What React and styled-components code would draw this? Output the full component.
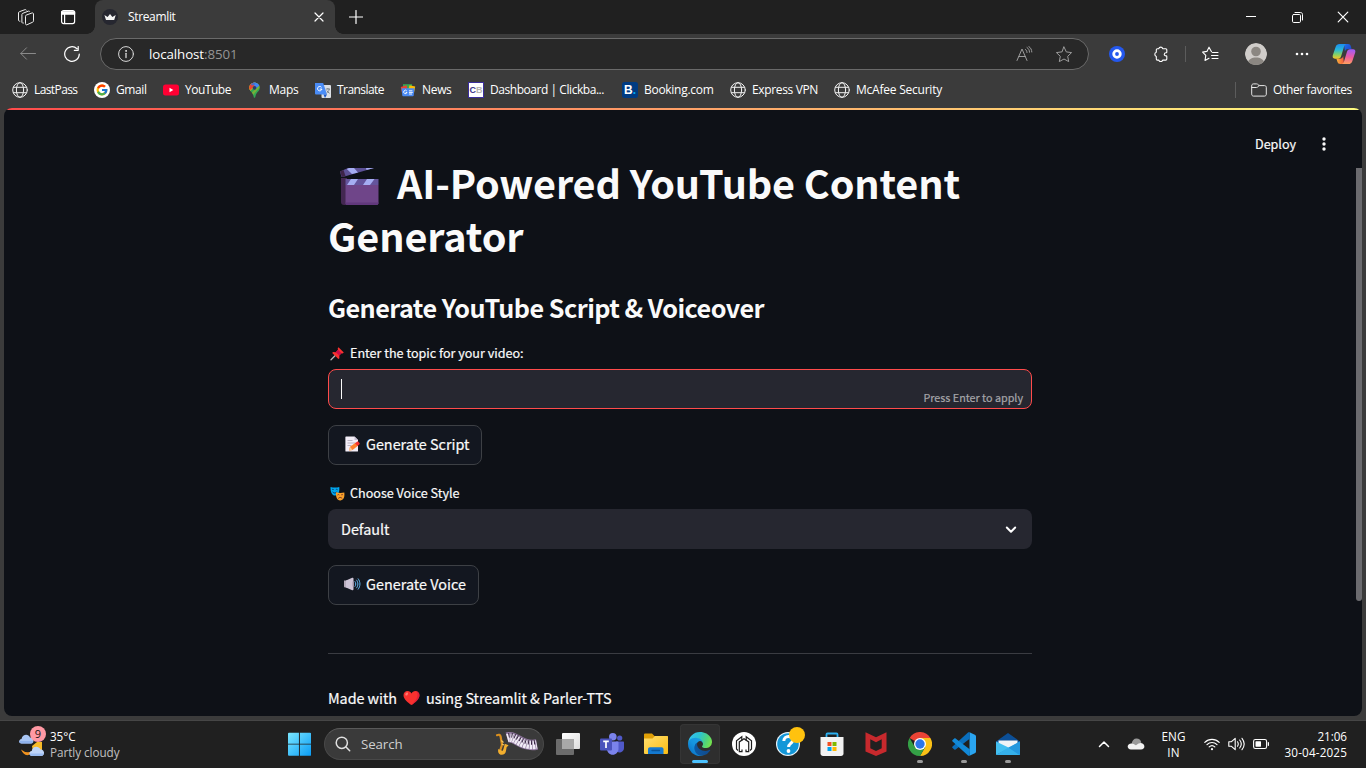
import React, { useLayoutEffect, useRef, useState } from 'react';
import styled, { createGlobalStyle } from 'styled-components';
import { FcGoogle } from 'react-icons/fc';

const ui = '"Open Sans", "Noto Sans", "Liberation Sans", sans-serif';
const source = '"Noto Sans CJK SC", "Open Sans", sans-serif';

const GlobalStyle = createGlobalStyle`
  * { box-sizing: border-box; }
  html, body { margin: 0; padding: 0; overflow: hidden; background: #3b3b3b; }
  svg { display: block; flex: none; }
`;

/* Text that tracks itself to an exact advance width. */
const FitSpan = styled.span`
  display: block;
  flex: none;
  white-space: pre;
`;
function Fit({ width, children, className }) {
  const ref = useRef(null);
  const [tracking, setTracking] = useState(0);
  useLayoutEffect(() => {
    const el = ref.current;
    const range = document.createRange();
    range.selectNodeContents(el);
    const natural = range.getBoundingClientRect().width;
    setTracking((width - natural) / el.textContent.length);
  }, [width]);
  return (
    <FitSpan ref={ref} className={className} style={{ width, letterSpacing: tracking }}>
      {children}
    </FitSpan>
  );
}

/* ---------- window frame ---------- */
const Screen = styled.div`
  width: 1366px;
  height: 768px;
  display: flex;
  flex-direction: column;
  background: #3b3b3b;
  overflow: hidden;
  font-family: ${ui};
`;
const TitleBar = styled.div`
  height: 34px;
  flex: none;
  display: flex;
  background: #202020;
`;
const Slot = styled.div`
  width: ${(p) => p.$w}px;
  height: ${(p) => p.$h || 34}px;
  flex: none;
  display: flex;
  align-items: center;
  justify-content: center;
`;
const Tab = styled.div`
  position: relative;
  width: 240px;
  height: 34px;
  display: flex;
  align-items: center;
  padding: 0 9px 0 7px;
  background: #3b3b3b;
  border-radius: 8px 8px 0 0;
  &::before, &::after {
    content: '';
    position: absolute;
    bottom: 0;
    width: 8px;
    height: 8px;
  }
  &::before { left: -8px; background: radial-gradient(circle at 0 0, transparent 7.5px, #3b3b3b 8px); }
  &::after { right: -8px; background: radial-gradient(circle at 100% 0, transparent 7.5px, #3b3b3b 8px); }
`;
const TabTitle = styled(Fit)`
  margin: 0 auto 0 10px;
  font-size: 12px;
  line-height: 16px;
  color: #fff;
`;
const Spacer = styled.div`flex: 1;`;

const Toolbar = styled.div`
  height: 40px;
  flex: none;
  display: flex;
  align-items: center;
  padding-left: 6px;
`;
const Address = styled.div`
  width: 989px;
  height: 32px;
  margin-left: 6px;
  margin-right: 6px;
  flex: none;
  display: flex;
  align-items: center;
  padding: 0 4px 0 15px;
  border: 1px solid #6a6a6a;
  border-radius: 16px;
  background: #282828;
`;
const Url = styled(Fit)`
  margin-left: 13px;
  font-size: 13.3px;
  line-height: 20px;
  color: #fff;
  i { font-style: normal; color: #959595; }
`;
const Divider = styled.div`
  width: 1px;
  height: 16px;
  flex: none;
  background: #5c5c5c;
`;
const Avatar = styled.div`
  width: 22px;
  height: 22px;
  border-radius: 50%;
  overflow: hidden;
`;

const Bookmarks = styled.div`
  height: 34px;
  flex: none;
  display: flex;
  align-items: center;
  padding: 0 14px 2px 12px;
`;
const Bookmark = styled.div`
  width: ${(p) => p.$w}px;
  flex: none;
  display: flex;
  align-items: center;
  gap: ${(p) => p.$gap || 6}px;
`;
const BookmarkName = styled(Fit)`
  font-size: 12px;
  line-height: 16px;
  color: #fff;
`;

/* ---------- streamlit page ---------- */
const Page = styled.main`
  position: relative;
  height: 608px;
  flex: none;
  margin: 0 4px;
  background: #0e1117;
  border-radius: 8px;
  overflow: hidden;
  display: flex;
  flex-direction: column;
  font-family: ${source};
  color: #fafafa;
  -webkit-text-stroke: 0.2px;
`;
const Decoration = styled.div`
  height: 2px;
  flex: none;
  background: linear-gradient(90deg, #ff4b4b, #ffa168 50%, #fffd80);
`;
const Header = styled.header`
  height: 58px;
  flex: none;
  display: flex;
  align-items: center;
  justify-content: flex-end;
  gap: 19px;
  padding: 9px 29px 0 0;
`;
const DeployLabel = styled(Fit)`
  font-size: 12.6px;
  line-height: 20px;
`;
const Content = styled.div`
  width: 704px;
  margin-left: 324px;
  display: flex;
  flex-direction: column;
  align-items: flex-start;
`;
const Title = styled.h1`
  margin: -13px 0 0;
  font-size: 39.6px;
  font-weight: 700;
  line-height: 53px;
  -webkit-text-stroke: 0;
`;
const TitleRow = styled.div`
  height: 53px;
  display: flex;
  align-items: center;
  padding-left: ${(p) => p.$indent || 0}px;
  gap: 17px;
`;
const ClapperBox = styled.div`padding-top: 9px;`;
const Subtitle = styled.h3`
  margin: 27px 0 0;
  height: 40px;
  font-size: 25.2px;
  line-height: 38px;
  font-weight: 600;
  -webkit-text-stroke: 0;
`;
const FieldLabel = styled.label`
  height: 20px;
  margin-top: ${(p) => p.$top}px;
  margin-bottom: 6px;
  padding-left: 2px;
  display: flex;
  align-items: center;
  gap: 5px;
  font-size: 12.6px;
  line-height: 20px;
`;
const Input = styled.div`
  width: 704px;
  height: 40px;
  padding: 0 8px 0 12px;
  display: flex;
  align-items: center;
  justify-content: space-between;
  border: 1px solid #ff4b4b;
  border-radius: 8px;
  background: #262730;
`;
const Caret = styled.div`
  width: 1px;
  height: 20px;
  background: #fafafa;
`;
const Hint = styled(Fit)`
  margin-top: 16px;
  font-size: 10.8px;
  line-height: 16px;
  color: #a5a5a9;
`;
const Button = styled.button`
  width: ${(p) => p.$w}px;
  height: 40px;
  margin: 16px 0 0;
  padding: 0 0 2px 15px;
  display: flex;
  align-items: center;
  gap: ${(p) => p.$gap || 6}px;
  border: 1px solid #3d4045;
  border-radius: 8px;
  background: #131720;
  color: #fafafa;
  font-family: ${source};
  font-size: 14.4px;
  line-height: 24px;
  -webkit-text-stroke: 0.2px;
`;
const Select = styled.div`
  width: 704px;
  height: 40px;
  padding: 0 14px 0 13px;
  display: flex;
  align-items: center;
  justify-content: space-between;
  border-radius: 8px;
  background: #262730;
  font-size: 14.4px;
  line-height: 24px;
`;
const Rule = styled.hr`
  width: 704px;
  height: 1px;
  margin: 48px 0 32px;
  border: 0;
  background: #3a3c42;
`;
const Credit = styled.p`
  margin: 0;
  display: flex;
  align-items: center;
  gap: 6px;
  font-size: 14.4px;
  line-height: 24px;
`;
const ScrollThumb = styled.div`
  position: absolute;
  right: 0;
  top: 60px;
  width: 6px;
  height: 433px;
  border-radius: 0 0 3px 3px;
  background: #6b6b6f;
`;

/* ---------- taskbar ---------- */
const Taskbar = styled.footer`
  height: 48px;
  margin-top: 4px;
  padding-bottom: 2px;
  flex: none;
  display: flex;
  align-items: center;
  border-top: 1px solid #464646;
  background: #202020;
`;
const Weather = styled.div`
  position: relative;
  width: 277px;
  height: 45px;
  display: flex;
  align-items: center;
  padding-left: 18px;
  gap: 4px;
`;
const Badge = styled.div`
  position: absolute;
  left: 30px;
  top: 5px;
  width: 16px;
  height: 16px;
  border-radius: 50%;
  background: #ff99a4;
  color: #151515;
  font-size: 11px;
  line-height: 16px;
  text-align: center;
`;
const Lines = styled.div`
  display: flex;
  flex-direction: column;
  align-items: ${(p) => p.$align || 'flex-start'};
  font-size: 11.7px;
  line-height: 16px;
  color: #fff;
`;
const Muted = styled(Fit)`color: #c0c0c0;`;
const SearchBox = styled.div`
  width: 220px;
  height: 32px;
  margin: 0 2px 0 3px;
  display: flex;
  align-items: center;
  padding: 0 4px 0 10px;
  border: 1px solid #484848;
  border-top-color: #5a5a5a;
  border-radius: 16px;
  background: #3a3a3a;
  color: #cfcfcf;
`;
const SearchText = styled(Fit)`
  margin: 0 auto 0 10px;
  font-size: 13.3px;
  line-height: 20px;
`;
const AppTile = styled.div`
  position: relative;
  width: 40px;
  height: 40px;
  margin: 0 2px;
  flex: none;
  display: flex;
  align-items: center;
  justify-content: center;
  border-radius: 4px;
  background: ${(p) => (p.$active ? '#2e2e2e' : 'transparent')};
  box-shadow: ${(p) => (p.$active ? 'inset 0 0 0 1px #353535' : 'none')};
`;
const RunMark = styled.div`
  position: absolute;
  left: ${(p) => (p.$active ? 12 : 17)}px;
  bottom: 1px;
  width: ${(p) => (p.$active ? 16 : 6)}px;
  height: 3px;
  border-radius: 2px;
  background: ${(p) => (p.$active ? '#4cc2ff' : '#9a9a9a')};
`;
const Tray = styled.div`
  display: flex;
  align-items: center;
  margin-left: auto;
  padding-right: 19px;
`;

/* ---------- icons ---------- */
const Line = ({ s = 16, h, vb, w = 1, c = '#fff', children, ...rest }) => (
  <svg width={s} height={h || s} viewBox={vb || `0 0 ${s} ${h || s}`} fill="none" stroke={c} strokeWidth={w} strokeLinecap="round" strokeLinejoin="round" {...rest}>
    {children}
  </svg>
);

const Workspaces = () => (
  <Line s={18} h={17} c="#eee">
    <path d="M8.500 7.300c0-.7.300-1.100.9-1.300l5.500-2c.9-.3 1.600.1 1.600 1v6.800c0 .7-.3 1.100-.9 1.400l-5.500 2.500c-.9.400-1.600 0-1.600-.9z" />
    <path d="M6.400 14.100c-.9.200-1.500-.2-1.500-1.100V5.600c0-.7.300-1.100.9-1.300l5.500-2.100c.7-.2 1.100-.1 1.400.3" />
    <path d="M2.900 12.200c-.9.100-1.400-.3-1.400-1.200V4c0-.7.300-1.100.9-1.300L7.900.700c.7-.2 1.100-.1 1.400.3" />
  </Line>
);
const TabPanel = () => (
  <Line s={16} w={1.2}>
    <rect x="1.600" y="1.600" width="13" height="13" rx="2" />
    <path d="M1.600 2.800h13v2.300h-13z" fill="#fff" />
    <path d="M4.600 5v9.500" />
  </Line>
);
const Crown = () => (
  <svg width="16" height="16" viewBox="0 0 16 16">
    <circle cx="8" cy="8" r="8" fill="#262730" />
    <path d="M2.400 5.900 5.600 8.100 8 5.100l2.400 3 3.300-2.200-1.500 5.100H4z" fill="#f4f4f4" />
  </svg>
);
const Cross = ({ s = 10, w = 1.200 }) => (
  <Line s={s} w={w} vb="0 0 10 10"><path d="M1 1l8 8M9 1L1 9" /></Line>
);
const Globe = () => (
  <Line s={16} c="#f0f0f0" w={1}>
    <circle cx="8" cy="8" r="7.300" />
    <ellipse cx="8" cy="8" rx="3.600" ry="7.300" />
    <path d="M1.500 5.300h13M1.500 10.700h13" />
  </Line>
);
const GoogleBadge = () => (
  <svg width="16" height="16" viewBox="0 0 16 16">
    <circle cx="8" cy="8" r="8" fill="#fff" />
    <FcGoogle x="1.500" y="1.500" size={13} />
  </svg>
);
const YouTubeIcon = () => (
  <svg width="16" height="16" viewBox="0 0 16 16">
    <rect y="2.500" width="16" height="11" rx="2.500" fill="#ff0033" />
    <path d="M6.500 5.800v4.400L10.300 8z" fill="#fff" />
  </svg>
);
const MapsIcon = () => (
  <svg width="16" height="16" viewBox="0 0 16 16">
    <clipPath id="pin"><path d="M7.500.500a5.300 5.300 0 0 1 5.300 5.300c0 3.200-3 4-4.300 8.100-.3 1.600-.5 1.900-1 1.900s-.7-.4-1-1.900c-1.200-4.100-4.300-4.900-4.300-8.100A5.300 5.300 0 0 1 7.500.500z" /></clipPath>
    <g clipPath="url(#pin)">
      <path d="M0 0h16v16H0z" fill="#34a853" />
      <path d="M1 11 12 0H0z" fill="#fbbc04" />
      <path d="M4.500 11 13 2.500V5L6 13z" fill="#fbbc04" opacity=".35" />
      <path d="M5.500 0H12l1.500 2.500L9.500 6 6.500 4z" fill="#4285f4" />
      <path d="M0 0h6.200L7.500 3.500 3.500 8 1 6z" fill="#ea4335" />
      <path d="M1 0h8L7.500 3 5 3.500 3.500 2z" fill="#2f73e0" opacity=".8" />
    </g>
    <circle cx="7.500" cy="5.800" r="1.900" fill="#2b4066" />
  </svg>
);
const TranslateIcon = () => (
  <svg width="16" height="16" viewBox="0 0 16 16">
    <rect x="6.500" y="3" width="9.500" height="13" rx="1" fill="#dcdfe4" />
    <path d="M0 1h8.200l3.800 11.500H1a1 1 0 0 1-1-1z" fill="#4a8cf6" />
    <path d="M8.500 12.500H12L10 16z" fill="#1a56c4" />
    <path d="M6.500 5.300a2.200 2.200 0 1 0 .4 1.800H4.700" fill="none" stroke="#fff" strokeWidth="1" />
    <path d="M10.800 7h4.200M12.900 6v1M14.300 7c-.4 2-1.500 3.200-2.600 4M11.800 8.500c.6 1.200 1.600 2.200 2.800 2.800" fill="none" stroke="#6a7178" strokeWidth=".8" />
  </svg>
);
const NewsIcon = () => (
  <svg width="16" height="16" viewBox="0 0 16 16">
    <path d="M3 2.200h9v6H3z" fill="#34a853" />
    <path d="M.800 5 6.500 3.300 8 9l-6 2z" fill="#ea4335" />
    <path d="M15.200 4.500 9.500 3.300 8 9l6 2z" fill="#fbbc04" />
    <path d="M1.500 6.200h13l-.8 7.300a.8.800 0 0 1-.8.700H3.100a.8.800 0 0 1-.8-.7z" fill="#4a8af4" />
    <path d="M6.800 9a1.700 1.700 0 1 0 .2 1.500H5.700" fill="none" stroke="#fff" strokeWidth=".9" />
    <path d="M9 8.800h3.400M9 10.400h3.800M9 12h3" stroke="#fff" strokeWidth=".9" />
  </svg>
);
const LetterTile = styled.div`
  width: 16px;
  height: 16px;
  flex: none;
  display: flex;
  align-items: center;
  justify-content: center;
  border-radius: ${(p) => p.$r || 0}px;
  border: ${(p) => (p.$edge ? `1px solid ${p.$edge}` : '0')};
  background: ${(p) => p.$bg};
  color: ${(p) => p.$fg};
  font: 700 ${(p) => p.$size}px/14px "Liberation Sans", sans-serif;
  em { font-style: normal; color: ${(p) => p.$fg2}; }
`;
const FolderOutline = () => (
  <Line s={16} c="#e8e8e8"><path d="M.700 3.600c0-1 .7-1.700 1.700-1.700h3.200c.5 0 .9.2 1.200.5l1.300 1.200h5.400c1 0 1.800.700 1.800 1.700v7c0 1-.8 1.800-1.800 1.800H2.400c-1 0-1.700-.8-1.700-1.800zM.700 5.500h4.800c.5 0 .8-.1 1.100-.5l1.500-1.400" /></Line>
);

const Copilot = () => (
  <svg width="24" height="22" viewBox="0 0 24 22">
    <defs>
      <linearGradient id="cpA" x1="0" y1="0" x2="0" y2="1"><stop offset="0" stopColor="#1b8df0" /><stop offset=".4" stopColor="#29b8d8" /><stop offset=".7" stopColor="#7fd06a" /><stop offset="1" stopColor="#f6c526" /></linearGradient>
      <linearGradient id="cpB" x1=".3" y1="0" x2=".2" y2="1"><stop offset="0" stopColor="#a05cf5" /><stop offset=".5" stopColor="#ec5aa0" /><stop offset="1" stopColor="#ffa25c" /></linearGradient>
      <linearGradient id="cpC" x1="0" y1="0" x2="1" y2="1"><stop offset="0" stopColor="#2270ee" /><stop offset="1" stopColor="#1b3fc0" /></linearGradient>
      <linearGradient id="cpD" x1="0" y1="0" x2="1" y2="0"><stop offset="0" stopColor="#f8b43a" /><stop offset="1" stopColor="#f2583e" /></linearGradient>
    </defs>
    <path d="M12 1h4c1.600 0 2.300.8 2.800 2.200l.8 2.800h-3.200c-2 0-2.900.8-3.500 2.600z" fill="url(#cpC)" />
    <path d="M12 21H8.300c-1.600 0-2.400-.8-2.900-2.200l-1-3.100h3.500c1.900 0 2.700-.8 3.300-2.600z" fill="url(#cpD)" />
    <path d="M7.500 1h6.800c-1.200.3-1.800 1.200-2.300 2.700L9.200 13c-.6 1.800-1.400 2.700-3.200 2.700H3c-2 0-2.700-1.600-2.200-3.400L3.700 3.800C4.300 1.900 5.600 1 7.500 1z" fill="url(#cpA)" />
    <path d="M16.500 21H9.800c1.200-.3 1.800-1.200 2.300-2.700L14.900 9c.6-1.900 1.400-2.800 3.200-2.800H21c2 0 2.800 1.600 2.200 3.400l-2.900 8.600c-.6 1.900-1.900 2.800-3.800 2.800z" fill="url(#cpB)" />
  </svg>
);

/* page emoji */
const Clapper = () => (
  <svg width="40" height="37" viewBox="0 0 40 37">
    <path d="M1 10h6v27H4c-2 0-3-1-3-3z" fill="#432751" />
    <path d="M0 3.500 8 0h26L4.500 8.400 1.500 9z" fill="#5c5196" />
    <path d="M0 3.500 3.500 2 5.500 8 2 9z" fill="#3d2348" />
    <path d="M9 0h5l4 4.500-6 1.600L6.800 1zM26 0h8l-7.500 2z" fill="#a5adf2" />
    <path d="M5.500 11h33v6h-33z" fill="#64549c" />
    <path d="M11 11h7l-4 6H7zM27 11h7.500l-4.500 6h-7z" fill="#a5adf2" />
    <path d="M5.500 17h33v18c0 1.200-.8 2-2 2h-29c-1.200 0-2-.8-2-2z" fill="#6f4589" />
    <path d="M5.500 34.500h33c0 1.800-.7 2.500-2 2.500h-29c-1.300 0-2-.7-2-2.500z" fill="#61387c" />
  </svg>
);
const Pushpin = () => (
  <svg width="15" height="15" viewBox="0 0 15 15">
    <path d="M1 13.800 5.500 9.300" stroke="#b8b8bd" strokeWidth="1.300" strokeLinecap="round" />
    <path d="M8.500 1.200 13.800 6.500l-1.200.9-1-.2-2.300 2.400.1 2.700-1 .8L2.200 7l.8-1 2.700.2L8 3.800l-.3-1.300z" fill="#f8312f" />
    <path d="M5.700 6.200 8 3.800l3.600 3.400-2.300 2.400z" fill="#ca0b4a" />
  </svg>
);
const Memo = () => (
  <svg width="16" height="16" viewBox="0 0 16 16">
    <path d="M2 .500h8.500L14 4v11c0 .4-.3.600-.6.600H2c-.4 0-.6-.2-.6-.6V1.100c0-.3.200-.6.600-.6z" fill="#f3eef8" />
    <path d="M10.500.500V4H14z" fill="#c9bfd3" />
    <path d="M3.500 4.500h5M3.500 7h8M3.500 9.500h4" stroke="#b4acbc" strokeWidth=".9" />
    <path d="M5 14.500 6 10.800l5.500-4 2.500 3-5.500 4.100z" fill="#ff822d" />
    <path d="M5 14.500 6 10.800 8.500 13.900z" fill="#f9c79a" />
    <path d="M11 7.200 13 5.700c.6-.4 1.100-.3 1.500.2l1 1.200c.4.5.3 1-.2 1.400l-1.800 1.400z" fill="#f8312f" />
  </svg>
);
const Masks = () => (
  <svg width="15" height="15" viewBox="0 0 15 15">
    <path d="M.500 1c3 .8 6 .8 8.800 0 .3 4.500-.6 8.300-4 8.600C1.800 9.600.300 5.500.500 1z" fill="#00a6ed" />
    <path d="M2 3.800c.6-.6 1.200-.6 1.800 0M5.800 3.800c.6-.6 1.200-.6 1.800 0M2.500 5.700c1 1.800 3.400 1.800 4.600 0" fill="none" stroke="#10305c" strokeWidth=".9" />
    <path d="M6 6.200c2.800 1 5.600 1 8.300.3.500 4-.3 7.500-3.800 7.900-3.600.2-4.800-3.900-4.500-8.200z" fill="#f9a12b" />
    <path d="M7.500 9c.6-.6 1.200-.6 1.800 0M11.200 9c.6-.6 1.200-.6 1.800 0M8.200 12.500c1-1.400 2.900-1.400 4 0" fill="none" stroke="#6d2b22" strokeWidth=".9" />
  </svg>
);
const Speaker = () => (
  <svg width="17" height="16" viewBox="0 0 17 16">
    <path d="M0 4.600h3v6.800H.8c-.4 0-.8-.4-.8-.8z" fill="#b5aabb" />
    <path d="M2 4.600 8.200 1.800c.8-.3 1.300 0 1.300.9v10.600c0 .8-.6 1.200-1.300.9L2 11.400z" fill="#cdc4d6" />
    <path d="M9.300 5.500v5" stroke="#998ea4" strokeWidth="1.400" />
    <path d="M11 5.600c1.100 1.400 1.100 3.400 0 4.800M12.600 4.100c1.800 2.300 1.800 5.500 0 7.800M14.200 2.800c2.400 3.100 2.400 7.300 0 10.400" fill="none" stroke="#62b5ee" strokeWidth="1" strokeLinecap="round" />
  </svg>
);
const Heart = () => (
  <svg width="17" height="16" viewBox="0 0 17 16">
    <path d="M8.500 15C5 12.800.500 9 .500 5.200.500 2.700 2.300 1 4.600 1c1.800 0 3.200.9 3.900 2.400C9.200 1.900 10.600 1 12.400 1c2.300 0 4.100 1.700 4.100 4.200C16.500 9 12 12.800 8.500 15z" fill="#f8312f" />
    <path d="M13.500 1.300c1.800.6 3 2 3 3.900C16.500 9 12 12.800 8.500 15c5-5 7.500-9 5-13.700z" fill="#d4183f" opacity=".6" />
    <ellipse cx="3.700" cy="4" rx="1.200" ry="1.700" transform="rotate(35 3.700 4)" fill="#ff7a72" />
  </svg>
);

/* taskbar icons */
const CloudSun = () => (
  <svg width="28" height="29" viewBox="0 0 28 29">
    <path d="M3 20.500a11 11 0 0 0 18-7l2 0v11H13c-4 3.500-8 1-10-4z" fill="#f0921e" />
    <path d="M14 17 19 13h5v9h-9z" fill="#f8bb28" />
    <path d="M3.500 14.500C.500 14.500.200 10.500 3.500 10c1-5 7-5.500 8.500-1.500 4-.5 5 5.500 1 6z" fill="#a9c6f4" />
    <path d="M3.500 14.500c-1.500 0-2.500-1-2.300-2.400h13.500c.2 1.300-.5 2.300-1.700 2.400z" fill="#8fb2ec" />
    <path d="M14 27c-3.200 0-3.500-4.500-.3-5 .5-5 7-5.800 8.800-1.500 4-.5 5 6 1 6.500z" fill="#bfd5f8" />
    <path d="M14 27c-1.600 0-2.500-1-2.400-2.500h14c0 1.500-.9 2.400-2.200 2.500z" fill="#9bbcf0" />
  </svg>
);
const WindowsLogo = () => (
  <svg width="24" height="24" viewBox="0 0 24 24">
    <defs><linearGradient id="win" gradientUnits="userSpaceOnUse" x1="0" y1="0" x2="24" y2="24"><stop offset="0" stopColor="#7be7ff" /><stop offset="1" stopColor="#0a9cf5" /></linearGradient></defs>
    <path d="M0 1a1 1 0 0 1 1-1h10.400v11.400H0zM12.400 0H23a1 1 0 0 1 1 1v10.400H12.400zM0 12.400h11.400V24H1a1 1 0 0 1-1-1zM12.400 12.400H24V23a1 1 0 0 1-1 1H12.400z" transform="translate(1 .7) scale(.96)" fill="url(#win)" />
  </svg>
);
const SearchArt = () => (
  <svg width="44" height="24" viewBox="0 0 44 24">
    <path d="M2 3.200c1.800-.9 3.300-.4 3.600 1.300l1.300 7.500c.4 3-2.400 5-1.400 7.500" fill="none" stroke="#d98f1e" strokeWidth="2.200" strokeLinecap="round" />
    <path d="M3.300 17c-.8 3 .5 5.800 3.400 5.800 2.400 0 4-1.500 4.300-4l.6-3.500 2-2-3.800-1.500-1.400 5.500-1 1.800z" fill="#f2ae2e" />
    <path d="M6.300 8.500l2.200 2M6.800 12l2.200 1" stroke="#f8c860" strokeWidth="1.200" />
    <path d="M12 5.500C21 3 26 15.500 42 12.500" fill="none" stroke="#8a7299" strokeWidth="10.500" />
    <path d="M12.300 6C21 3.500 26 15.500 41.700 12.500" fill="none" stroke="#f1ecf6" strokeWidth="8.500" strokeDasharray="2.400 .6" />
    <path d="M13.500 3.500C22 1.500 27 13 41 10" fill="none" stroke="#33213e" strokeWidth="4.500" strokeDasharray="1 2" />
  </svg>
);
const TaskView = () => (
  <svg width="24" height="24" viewBox="0 0 24 24">
    <defs><linearGradient id="tv" x1="0" y1="0" x2="1" y2="1"><stop offset="0" stopColor="#fff" /><stop offset="1" stopColor="#dcdcdc" /></linearGradient></defs>
    <rect x="6" y="1" width="18" height="16" rx="1" fill="url(#tv)" />
    <rect x="0" y="7" width="18" height="16" rx="1" fill="#6c6c6c" />
    <path d="M6 7h12v10H6z" fill="#a8a8a8" />
  </svg>
);
const Teams = () => (
  <svg width="24" height="24" viewBox="0 0 24 24">
    <circle cx="19.700" cy="6" r="2.600" fill="#5059c9" />
    <path d="M16 9.500h7c.6 0 1 .4 1 1v5.500a4.500 4.500 0 0 1-8 2.700z" fill="#5059c9" />
    <circle cx="12.800" cy="4.800" r="3.800" fill="#7b83eb" />
    <path d="M7 9.500h10.500c.6 0 1 .4 1 1v6.300c0 3.300-2.600 6-5.800 6s-5.800-2.700-5.800-6z" fill="#7b83eb" />
    <rect x="0" y="6.500" width="12" height="12" rx="1" fill="#4b53bc" />
    <path d="M3.200 9.400h5.600M6 9.400v6.500" stroke="#fff" strokeWidth="1.700" />
  </svg>
);
const Explorer = () => (
  <svg width="24" height="24" viewBox="0 0 24 24">
    <defs><linearGradient id="fe" x1="0" y1="0" x2="1" y2="1"><stop offset="0" stopColor="#ffdf70" /><stop offset="1" stopColor="#fbbc12" /></linearGradient></defs>
    <path d="M0 2.500A1 1 0 0 1 1 1.500h7L10.500 4H23a1 1 0 0 1 1 1v4H0z" fill="#e09f06" />
    <path d="M0 6.500h8.500L11 4h12a1 1 0 0 1 1 1v16a1 1 0 0 1-1 1H1a1 1 0 0 1-1-1z" fill="url(#fe)" />
    <path d="M4 22v-4.800c0-1.200.8-2 2-2h11.500c1.200 0 2 .8 2 2V22z" fill="#1479d0" />
    <path d="M8 18.500h7.500" stroke="#0a5499" strokeWidth="1.300" strokeLinecap="round" />
  </svg>
);
const Edge = () => (
  <svg width="24" height="24" viewBox="0 0 256 256">
    <defs>
      <linearGradient id="e1" x1="0" y1=".5" x2="1" y2=".5"><stop offset="0" stopColor="#0c59a4" /><stop offset="1" stopColor="#114a8b" /></linearGradient>
      <linearGradient id="e2" x1=".8" y1=".2" x2=".2" y2="1"><stop offset="0" stopColor="#1b9de2" /><stop offset=".4" stopColor="#1595df" /><stop offset="1" stopColor="#0a70c4" /></linearGradient>
      <linearGradient id="e3" x1="0" y1=".3" x2="1" y2=".6"><stop offset="0" stopColor="#35c1f1" /><stop offset=".4" stopColor="#2cc3d2" /><stop offset=".75" stopColor="#4fd37c" /><stop offset="1" stopColor="#75e34c" /></linearGradient>
    </defs>
    <path d="M231 190.500c-3.400 1.800-6.900 3.400-10.500 4.700a101.500 101.500 0 0 1-35.900 6.400c-47.300 0-88.500-32.500-88.500-74.300A31.500 31.500 0 0 1 112.600 100C69.800 101.800 58.800 146.400 58.800 172.500c0 74 68.100 81.400 82.800 81.400 7.900 0 19.800-2.300 27-4.600l1.300-.4a128.300 128.300 0 0 0 66.600-52.800 4 4 0 0 0-5.500-5.600z" fill="url(#e1)" />
    <path d="M105.700 241.500a79.200 79.200 0 0 1-22.700-21.400 80.700 80.700 0 0 1 29.500-120c3.200-1.500 8.500-4.100 15.600-4a32.400 32.400 0 0 1 25.700 13 31.900 31.900 0 0 1 6.300 18.700c0-.2 24.500-79.600-80-79.600-43.900 0-80 41.600-80 78.200a130.200 130.200 0 0 0 12.100 56 128 128 0 0 0 156.400 67 75.500 75.500 0 0 1-62.900-7.900z" fill="url(#e2)" />
    <path d="M152.400 148.900c-.8 1-3.300 2.500-3.300 5.700 0 2.600 1.700 5.100 4.700 7.200 14.400 10 41.500 8.700 41.600 8.700 10.700 0 21.100-2.900 30.300-8.300A61.400 61.400 0 0 0 256 109.200c.3-22.400-8-37.300-11.300-43.900C223.500 23.900 177.700 0 128 0A128 128 0 0 0 0 126.200c.5-36.500 36.800-66 80-66 3.500 0 23.500.3 42 10.100a72.600 72.600 0 0 1 30.900 29.300c6.100 10.600 7.200 24.100 7.200 29.500s-2.700 13.300-7.800 19.900z" fill="url(#e3)" />
  </svg>
);
const HaloApp = () => (
  <svg width="24" height="24" viewBox="0 0 24 24" fill="none" stroke="#1d1d1d" strokeWidth="1.200">
    <circle cx="12" cy="12" r="12" fill="#fff" stroke="none" />
    <path d="M6 18.500 4.500 17V8.800L9.800 4.800v4M18 18.500l1.500-1.500V8.800l-5.300-4v4" />
    <path d="M10 17.500v2.200H7.300V9.900L12 6.700l4.700 3.200v9.800H14v-2.200" />
  </svg>
);
const HelpShift = styled.div`
  position: relative;
  left: 2px;
  top: -2px;
`;
const HelpApp = () => (
  <HelpShift>
    <svg width="30" height="30" viewBox="0 0 30 30">
      <circle cx="13" cy="17" r="12" fill="#e8f4fb" />
      <circle cx="13" cy="17" r="10.800" fill="#1397d8" />
      <path d="M8.800 14c.2-6 9-5.700 8.800-.7-.2 3-4 3.200-4 6.700" fill="none" stroke="#fff" strokeWidth="3" />
      <circle cx="13.500" cy="24" r="1.900" fill="#fff" />
      <circle cx="22" cy="8" r="8" fill="#ffc20e" />
    </svg>
  </HelpShift>
);
const Store = () => (
  <svg width="24" height="24" viewBox="0 0 24 24">
    <path d="M6.500 6V2.500c0-.6.400-1 1-1h9c.6 0 1 .4 1 1V6" fill="none" stroke="#2cb0f0" strokeWidth="1.800" />
    <path d="M.500 5h23v16.500c0 1.400-1 2.500-2.500 2.500H3C1.600 24 .500 23 .500 21.500z" fill="#f2f2f2" />
    <path d="M7.500 10h4v4h-4z" fill="#f25022" /><path d="M12.500 10h4v4h-4z" fill="#7fba00" />
    <path d="M7.500 15h4v4h-4z" fill="#00a4ef" /><path d="M12.500 15h4v4h-4z" fill="#ffb900" />
  </svg>
);
const McAfee = () => (
  <svg width="24" height="24" viewBox="0 0 24 24">
    <path d="M1.500.200 12 5.200 22.500.200v19.300L12 24 1.500 19.500zM6.300 7.300v9l5.700 2.800 5.700-2.800v-9L12 10.300z" fill="#c7292d" fillRule="evenodd" />
  </svg>
);
const Chrome = () => (
  <svg width="24" height="24" viewBox="0 0 24 24">
    <path d="M12 12 1.600 6A12 12 0 0 1 22.400 6z" fill="#ea4335" />
    <path d="M12 6h10.400A12 12 0 0 1 12 24l5.200-9z" fill="#fbc116" />
    <path d="M1.600 6 6.800 15 12 18l5.200-3L12 24A12 12 0 0 1 1.600 6z" fill="#34a046" />
    <circle cx="12" cy="12" r="6" fill="#fff" />
    <circle cx="12" cy="12" r="4.700" fill="#2c76ea" />
  </svg>
);
const VSCode = () => (
  <svg width="24" height="24" viewBox="0 0 24 24">
    <path d="M17.500.300 22.800 2.800c.7.300 1.200 1 1.200 1.800v14.800c0 .8-.5 1.500-1.200 1.800l-5.300 2.500z" fill="#2aa5f0" />
    <path d="M17.500.300 18 6.500 3.600 17.600c-.4.300-.9.300-1.300 0L.6 16c-.5-.4-.5-1.100 0-1.500L16 .6c.4-.4 1-.5 1.500-.3z" fill="#0a6fbd" />
    <path d="M17.500 23.700 18 17.500 3.600 6.400c-.4-.3-.9-.3-1.300 0L.6 8c-.5.4-.5 1.100 0 1.500L16 23.400c.4.400 1 .5 1.500.3z" fill="#1289d8" />
  </svg>
);
const Mail = () => (
  <svg width="24" height="24" viewBox="0 0 24 24">
    <path d="M0 9.500 12 1l12 8.500v3H0z" fill="#0c4f96" />
    <path d="M2.500 8.500h19v9h-19z" fill="#f1f4f7" />
    <path d="M24 9.500 0 23h24z" fill="#2397de" />
    <path d="M0 9.500V23l13.500-7z" fill="#43bff0" />
    <path d="M0 23 12.500 15.500 24 23z" fill="#35b0ea" />
    <path d="M24 9.500V23L12.500 15.500z" fill="#2397de" />
  </svg>
);

const bookmarks = [
  [82, 43.5, 'LastPass', <Globe />],
  [69, 30.5, 'Gmail', <GoogleBadge />],
  [84, 46, 'YouTube', <YouTubeIcon />],
  [68, 29.5, 'Maps', <MapsIcon />],
  [85, 47, 'Translate', <TranslateIcon />],
  [68, 29.5, 'News', <NewsIcon />],
  [154, 114, 'Dashboard | Clickba...', <LetterTile $bg="#fff" $edge="#3a2d9c" $fg="#3a3489" $fg2="#b9b5b2" $size={9}>C<em>B</em></LetterTile>],
  [108, 69.5, 'Booking.com', <LetterTile $bg="#003b82" $r={2.5} $fg="#fff" $fg2="#00a8f0" $size={12}>B<em>.</em></LetterTile>],
  [104, 66, 'Express VPN', <Globe />],
  [120, 86, 'McAfee Security', <Globe />],
];

const apps = [
  [<TaskView />], [<Teams />], [<Explorer />], [<Edge />, true, true], [<HaloApp />], [<HelpApp />],
  [<Store />], [<McAfee />], [<Chrome />, true], [<VSCode />, true], [<Mail />, true],
];

function BrowserChrome() {
  return (
    <>
      <TitleBar>
        <Slot $w={52}><Workspaces /></Slot>
        <Slot $w={32}><TabPanel /></Slot>
        <Slot $w={11} />
        <Tab>
          <Crown />
          <TabTitle width={47.500}>Streamlit</TabTitle>
          <Slot $w={14}><Cross s={10} w={1.200} /></Slot>
        </Tab>
        <Slot $w={42}><Line s={14} w={1.200}><path d="M7 .500v13M.500 7h13" /></Line></Slot>
        <Spacer />
        <Slot $w={46}><Line s={10}><path d="M0 4.500h10" strokeLinecap="butt" /></Line></Slot>
        <Slot $w={46}><Line s={11}><rect x=".500" y="2.500" width="8" height="8" rx="1.200" /><path d="M3 .500h5.500c1.200 0 2 .8 2 2V8" /></Line></Slot>
        <Slot $w={46}><Cross s={12} w={1} /></Slot>
      </TitleBar>
      <Toolbar>
        <Slot $w={44}><Line s={16} c="#8a8a8a"><path d="M15.500 7.500H.800M6.500 1.800.800 7.500l5.700 5.700" /></Line></Slot>
        <Slot $w={44}><Line s={16} w={1.200}><path d="M15.300 8A7.300 7.300 0 1 1 13 2.700M14.200.500v3.800H10.300" /></Line></Slot>
        <Address>
          <Slot $w={20}><Line s={16} c="#d8d8d8"><circle cx="8" cy="8" r="7.400" /><path d="M8 7.300v4.200" strokeWidth="1.300" /><circle cx="8" cy="4.900" r=".5" fill="#d8d8d8" /></Line></Slot>
          <Url width={88.500}>localhost<i>:8501</i></Url>
          <Spacer />
          <Slot $w={40}><Line s={17} h={16} c="#9c9c9c"><path d="M1 14.500 6 3l5 11.500M2.800 10.500h6.400M9.500 3.500c1 .7 1.500 1.800 1.500 3M11 1.500c1.600 1 2.500 2.700 2.500 4.700M12.800.500c2 1.300 3 3.300 3 5.500" /></Line></Slot>
          <Slot $w={40}><Line s={17} c="#9c9c9c"><path d="M8 1l2.300 4.900 5.300.7-3.900 3.700 1 5.300L8 13l-4.700 2.600 1-5.300L.400 6.600l5.300-.7z" /></Line></Slot>
        </Address>
        <Slot $w={44}><svg width="16" height="16" viewBox="0 0 16 16"><circle cx="8" cy="8" r="8" fill="#2458ee" /><circle cx="8" cy="8" r="3.300" fill="none" stroke="#fff" strokeWidth="2.800" /></svg></Slot>
        <Slot $w={44}><Line s={16} w={1.100}><path d="M4.300 2.700h1.500a2 2 0 0 1 3.900 0h3.100c.6 0 1 .4 1 1v2.500c0 .4-.3.500-.6.500-2.400-.1-2.700 3.300 0 3.200.4 0 .6.200.6.500v2.700c0 .6-.4 1-1 1H9.700a2 2 0 0 1-3.900 0H4.300c-.6 0-1-.4-1-1v-2.600a2.300 2.300 0 0 1 0-4.300V3.700c0-.6.4-1 1-1z" /></Line></Slot>
        <Slot $w={5}><Divider /></Slot>
        <Slot $w={44}><Line s={17} h={16} w={1.100}><path d="M9.500 5.800 7 1.200 4.900 5.400l-4.300.7 3.200 3.200-.8 5.200 4-2.200M10.500 6.500h5.500M9.500 9.500H16M10 12.500h6" /></Line></Slot>
        <Slot $w={48}>
          <Avatar><svg width="22" height="22" viewBox="0 0 22 22"><circle cx="11" cy="11" r="11" fill="#d0cdca" /><circle cx="11" cy="8.500" r="4.800" fill="#8b8782" /><path d="M2.500 20c1-7.500 16-7.500 17 0l-4 3h-9z" fill="#8b8782" /></svg></Avatar>
        </Slot>
        <Slot $w={44}><svg width="14" height="4" viewBox="0 0 14 4" fill="#fff"><circle cx="2" cy="2" r="1.300" /><circle cx="7" cy="2" r="1.300" /><circle cx="12" cy="2" r="1.300" /></svg></Slot>
        <Slot $w={40}><Copilot /></Slot>
      </Toolbar>
      <Bookmarks>
        {bookmarks.map(([w, tw, name, icon]) => (
          <Bookmark key={name} $w={w}>{icon}<BookmarkName width={tw}>{name}</BookmarkName></Bookmark>
        ))}
        <Spacer />
        <Divider />
        <Slot $w={15} $h={16} />
        <Bookmark $w={101}><FolderOutline /><BookmarkName width={79}>Other favorites</BookmarkName></Bookmark>
      </Bookmarks>
    </>
  );
}

function StreamlitPage() {
  return (
    <Page>
      <Decoration />
      <Header>
        <DeployLabel width={41}>Deploy</DeployLabel>
        <Slot $w={18} $h={20}><svg width="4" height="14" viewBox="0 0 4 14" fill="#fafafa"><circle cx="2" cy="2" r="1.700" /><circle cx="2" cy="7" r="1.700" /><circle cx="2" cy="12" r="1.700" /></svg></Slot>
      </Header>
      <Content>
        <Title>
          <TitleRow $indent={12}><ClapperBox><Clapper /></ClapperBox><Fit width={563}>AI-Powered YouTube Content</Fit></TitleRow>
          <TitleRow><Fit width={195.500}>Generator</Fit></TitleRow>
        </Title>
        <Subtitle><Fit width={436}>Generate YouTube Script &amp; Voiceover</Fit></Subtitle>
        <FieldLabel $top={15}><Pushpin /><Fit width={173.500}>Enter the topic for your video:</Fit></FieldLabel>
        <Input><Caret /><Hint width={99.500}>Press Enter to apply</Hint></Input>
        <Button $w={154}><Memo /><Fit width={103.500}>Generate Script</Fit></Button>
        <FieldLabel $top={18}><Masks /><Fit width={109.500}>Choose Voice Style</Fit></FieldLabel>
        <Select><Fit width={48.500}>Default</Fit><Line s={13} w={2} vb="0 0 13 13"><path d="M1.800 4.500l4.200 4.200 4.200-4.200" /></Line></Select>
        <Button $w={151} $gap={5}><Speaker /><Fit width={100}>Generate Voice</Fit></Button>
        <Rule />
        <Credit><Fit width={69}>Made with</Fit><Heart /><Fit width={185.500}>using Streamlit &amp; Parler-TTS</Fit></Credit>
      </Content>
      <ScrollThumb />
    </Page>
  );
}

function WindowsTaskbar() {
  return (
    <Taskbar>
      <Weather>
        <CloudSun />
        <Badge>9</Badge>
        <Lines><Fit width={25.500}>35°C</Fit><Muted width={69.500}>Partly cloudy</Muted></Lines>
      </Weather>
      <Slot $w={44} $h={40}><WindowsLogo /></Slot>
      <SearchBox>
        <Line s={16} w={1.500} c="#e0e0e0"><circle cx="6.800" cy="6.800" r="5.600" /><path d="M11 11l3.700 3.700" /></Line>
        <SearchText width={41.500}>Search</SearchText>
        <SearchArt />
      </SearchBox>
      {apps.map(([icon, running, active], i) => (
        <AppTile key={i} $active={active}>{icon}{running && <RunMark $active={active} />}</AppTile>
      ))}
      <Tray>
        <Slot $w={32}><Line s={12} w={1.500}><path d="M1.500 8.500 6 4l4.500 4.500" /></Line></Slot>
        <Slot $w={32}><svg width="18" height="12" viewBox="0 0 18 12"><path d="M4.500 6C5 2.500 7 .500 9.500.500s4.300 1.500 4.800 4L9 8z" fill="#9a9a9a" /><path d="M4 11.500c-4.500 0-4.500-6 .5-6 1.500 0 3 1 4.500 1.700 1.500-1 3-2.500 5-2.200 4.500.5 4.500 6.500 0 6.500z" fill="#f2f2f2" /></svg></Slot>
        <Slot $w={44} $h={40}><Lines $align="center"><Fit width={24}>ENG</Fit><Fit width={12.500}>IN</Fit></Lines></Slot>
        <Slot $w={32}><Line s={16} w={1.200}><path d="M.800 6.300c4-4 10.400-4 14.400 0M3 8.600c2.800-2.800 7.200-2.800 10 0M5.200 10.900c1.600-1.500 4-1.500 5.600 0" /><circle cx="8" cy="13.200" r="1.100" fill="#fff" stroke="none" /></Line></Slot>
        <Slot $w={17}><Line s={17} h={16} w={1.100}><path d="M.800 5.700h2.700L7.200 2.300v11.400L3.500 10.300H.800zM9.500 5.800c.9 1.300.9 3.100 0 4.400M11.700 4c1.900 2.400 1.900 5.600 0 8M14 2.300c2.700 3.500 2.700 7.900 0 11.400" /></Line></Slot>
        <Slot $w={32}><Line s={16} w={1.100}><rect x=".600" y="3.500" width="13" height="9" rx="1.800" /><path d="M15.400 6.700v2.600" strokeWidth="1.300" /><rect x="2.500" y="5.300" width="5.500" height="5.400" rx=".6" fill="#fff" stroke="none" /></Line></Slot>
        <Slot $w={8} />
        <Lines $align="flex-end"><Fit width={29.500}>21:06</Fit><Fit width={62.500}>30-04-2025</Fit></Lines>
      </Tray>
    </Taskbar>
  );
}

export default function App() {
  return (
    <Screen>
      <GlobalStyle />
      <BrowserChrome />
      <StreamlitPage />
      <WindowsTaskbar />
    </Screen>
  );
}
